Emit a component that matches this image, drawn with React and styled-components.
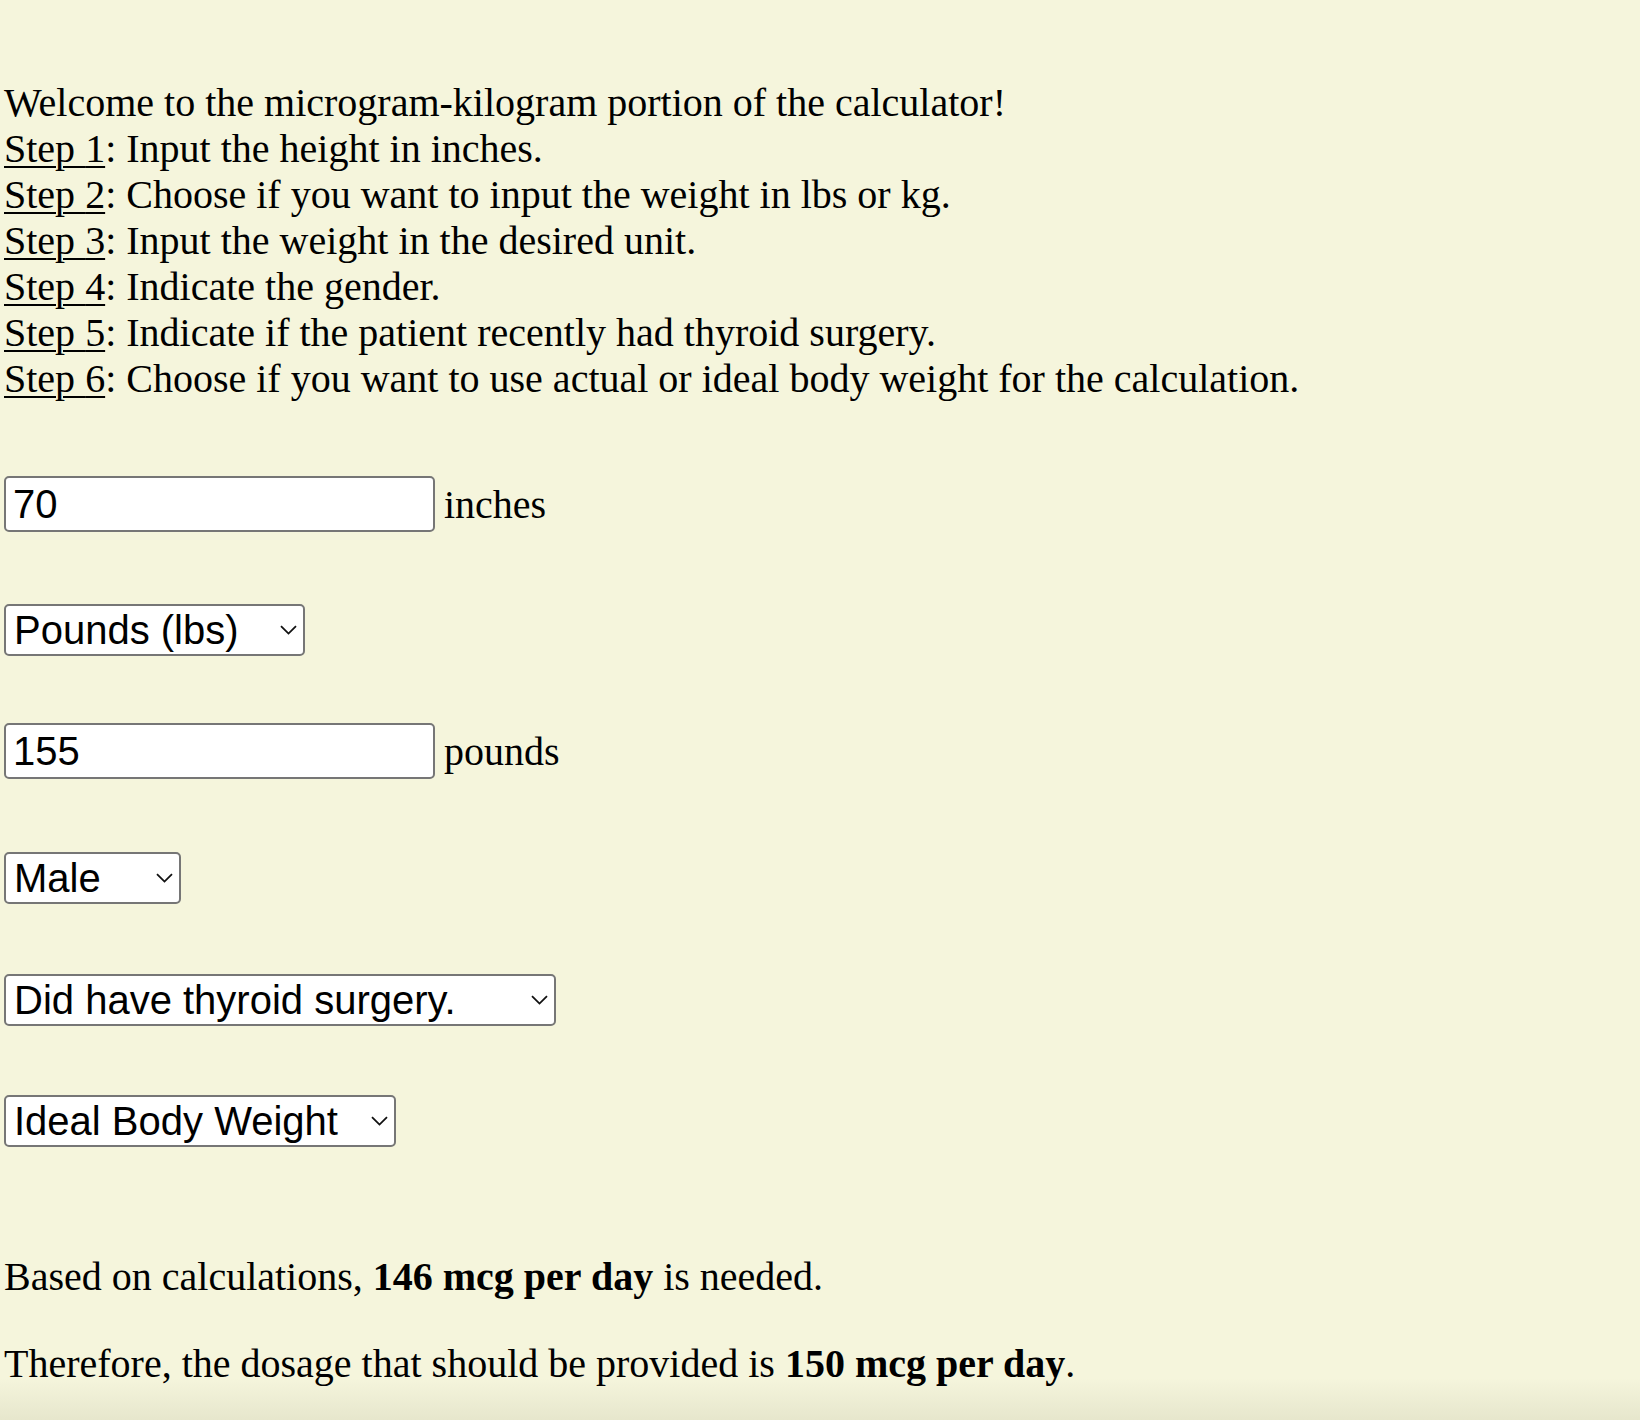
import React from 'react'
import styled, { createGlobalStyle } from 'styled-components'

const steps = [
    'Input the height in inches.',
    'Choose if you want to input the weight in lbs or kg.',
    'Input the weight in the desired unit.',
    'Indicate the gender.',
    'Indicate if the patient recently had thyroid surgery.',
    'Choose if you want to use actual or ideal body weight for the calculation.',
]

const GlobalStyle = createGlobalStyle`
    html{
        background-color: #f5f5dc;
        background-image: linear-gradient(to bottom, rgba(0, 0, 0, 0) 1378px, rgba(60, 60, 20, 0.08) 1420px);
        background-attachment: fixed;
    }
    body{
        margin: 0;
        font-family: 'Liberation Serif', 'Times New Roman', serif;
        font-size: 40px;
        color: #000;
    }
`

function Chevron() {
    return (
        <svg width="17" height="10" viewBox="0 0 17 10" fill="none">
            <path d="M1 1.2 L8.5 8.6 L16 1.2" stroke="#111" strokeWidth="1.8" />
        </svg>
    )
}

function Dropdown({ width, value, options }) {
    return (
        <SelectWrap $width={width}>
            <Select defaultValue={value}>
                {options.map(opt => <option key={opt}>{opt}</option>)}
            </Select>
            <Arrow><Chevron /></Arrow>
        </SelectWrap>
    )
}

function App() {
    return (
        <>
            <GlobalStyle />
            <Page>
                <Intro>
                    <Line>Welcome to the microgram-kilogram portion of the calculator!</Line>
                    {steps.map((text, i) => (
                        <Line key={i}><u>Step {i + 1}</u>: {text}</Line>
                    ))}
                </Intro>

                <Row $top={74}>
                    <TextInput type="text" defaultValue="70" />
                    <Unit>inches</Unit>
                </Row>
                <Row $top={72}>
                    <Dropdown width={301} value="Pounds (lbs)" options={['Pounds (lbs)', 'Kilograms (kg)']} />
                </Row>
                <Row $top={67}>
                    <TextInput type="text" defaultValue="155" />
                    <Unit>pounds</Unit>
                </Row>
                <Row $top={73}>
                    <Dropdown width={177} value="Male" options={['Male', 'Female']} />
                </Row>
                <Row $top={70}>
                    <Dropdown width={552} value="Did have thyroid surgery." options={['Did have thyroid surgery.', 'Did not have thyroid surgery.']} />
                </Row>
                <Row $top={69}>
                    <Dropdown width={392} value="Ideal Body Weight" options={['Ideal Body Weight', 'Actual Body Weight']} />
                </Row>

                <Results>
                    <p>Based on calculations, <b>146 mcg per day</b> is needed.</p>
                    <p>Therefore, the dosage that should be provided is <b>150 mcg per day</b>.</p>
                </Results>
            </Page>
        </>
    )
}

const Page = styled.main`
    display: flex;
    flex-direction: column;
    align-items: flex-start;
    padding: 80px 0 0 4px;
`

const Intro = styled.div`
    line-height: 46px;
`

const Line = styled.div`
    white-space: nowrap;
    u{
        text-decoration-thickness: 2px;
        text-underline-offset: 4px;
    }
`

const Row = styled.div`
    display: flex;
    align-items: baseline;
    gap: 9px;
    margin-top: ${props => props.$top}px;
    line-height: 46px;
`

const TextInput = styled.input`
    box-sizing: border-box;
    width: 431px;
    height: 56px;
    margin: 0;
    padding: 0 7px;
    border: 2px solid #767676;
    border-radius: 5px;
    background: #fff;
    font-family: 'Liberation Sans', Arial, sans-serif;
    font-size: 40px;
    color: #000;
    outline: none;
`

const Unit = styled.span`
    font-size: 40px;
`

const SelectWrap = styled.div`
    position: relative;
    width: ${props => props.$width}px;
    height: 52px;
`

const Select = styled.select`
    appearance: none;
    box-sizing: border-box;
    width: 100%;
    height: 100%;
    margin: 0;
    padding: 0 34px 0 8px;
    border: 2px solid #767676;
    border-radius: 5px;
    background: #fff;
    font-family: 'Liberation Sans', Arial, sans-serif;
    font-size: 40px;
    color: #000;
    outline: none;
`

const Arrow = styled.span`
    position: absolute;
    right: 8px;
    top: 50%;
    transform: translateY(-50%);
    display: flex;
    pointer-events: none;
`

const Results = styled.div`
    margin-top: 107px;
    line-height: 46px;
    p{
        margin: 0 0 41px;
    }
`

export default App
